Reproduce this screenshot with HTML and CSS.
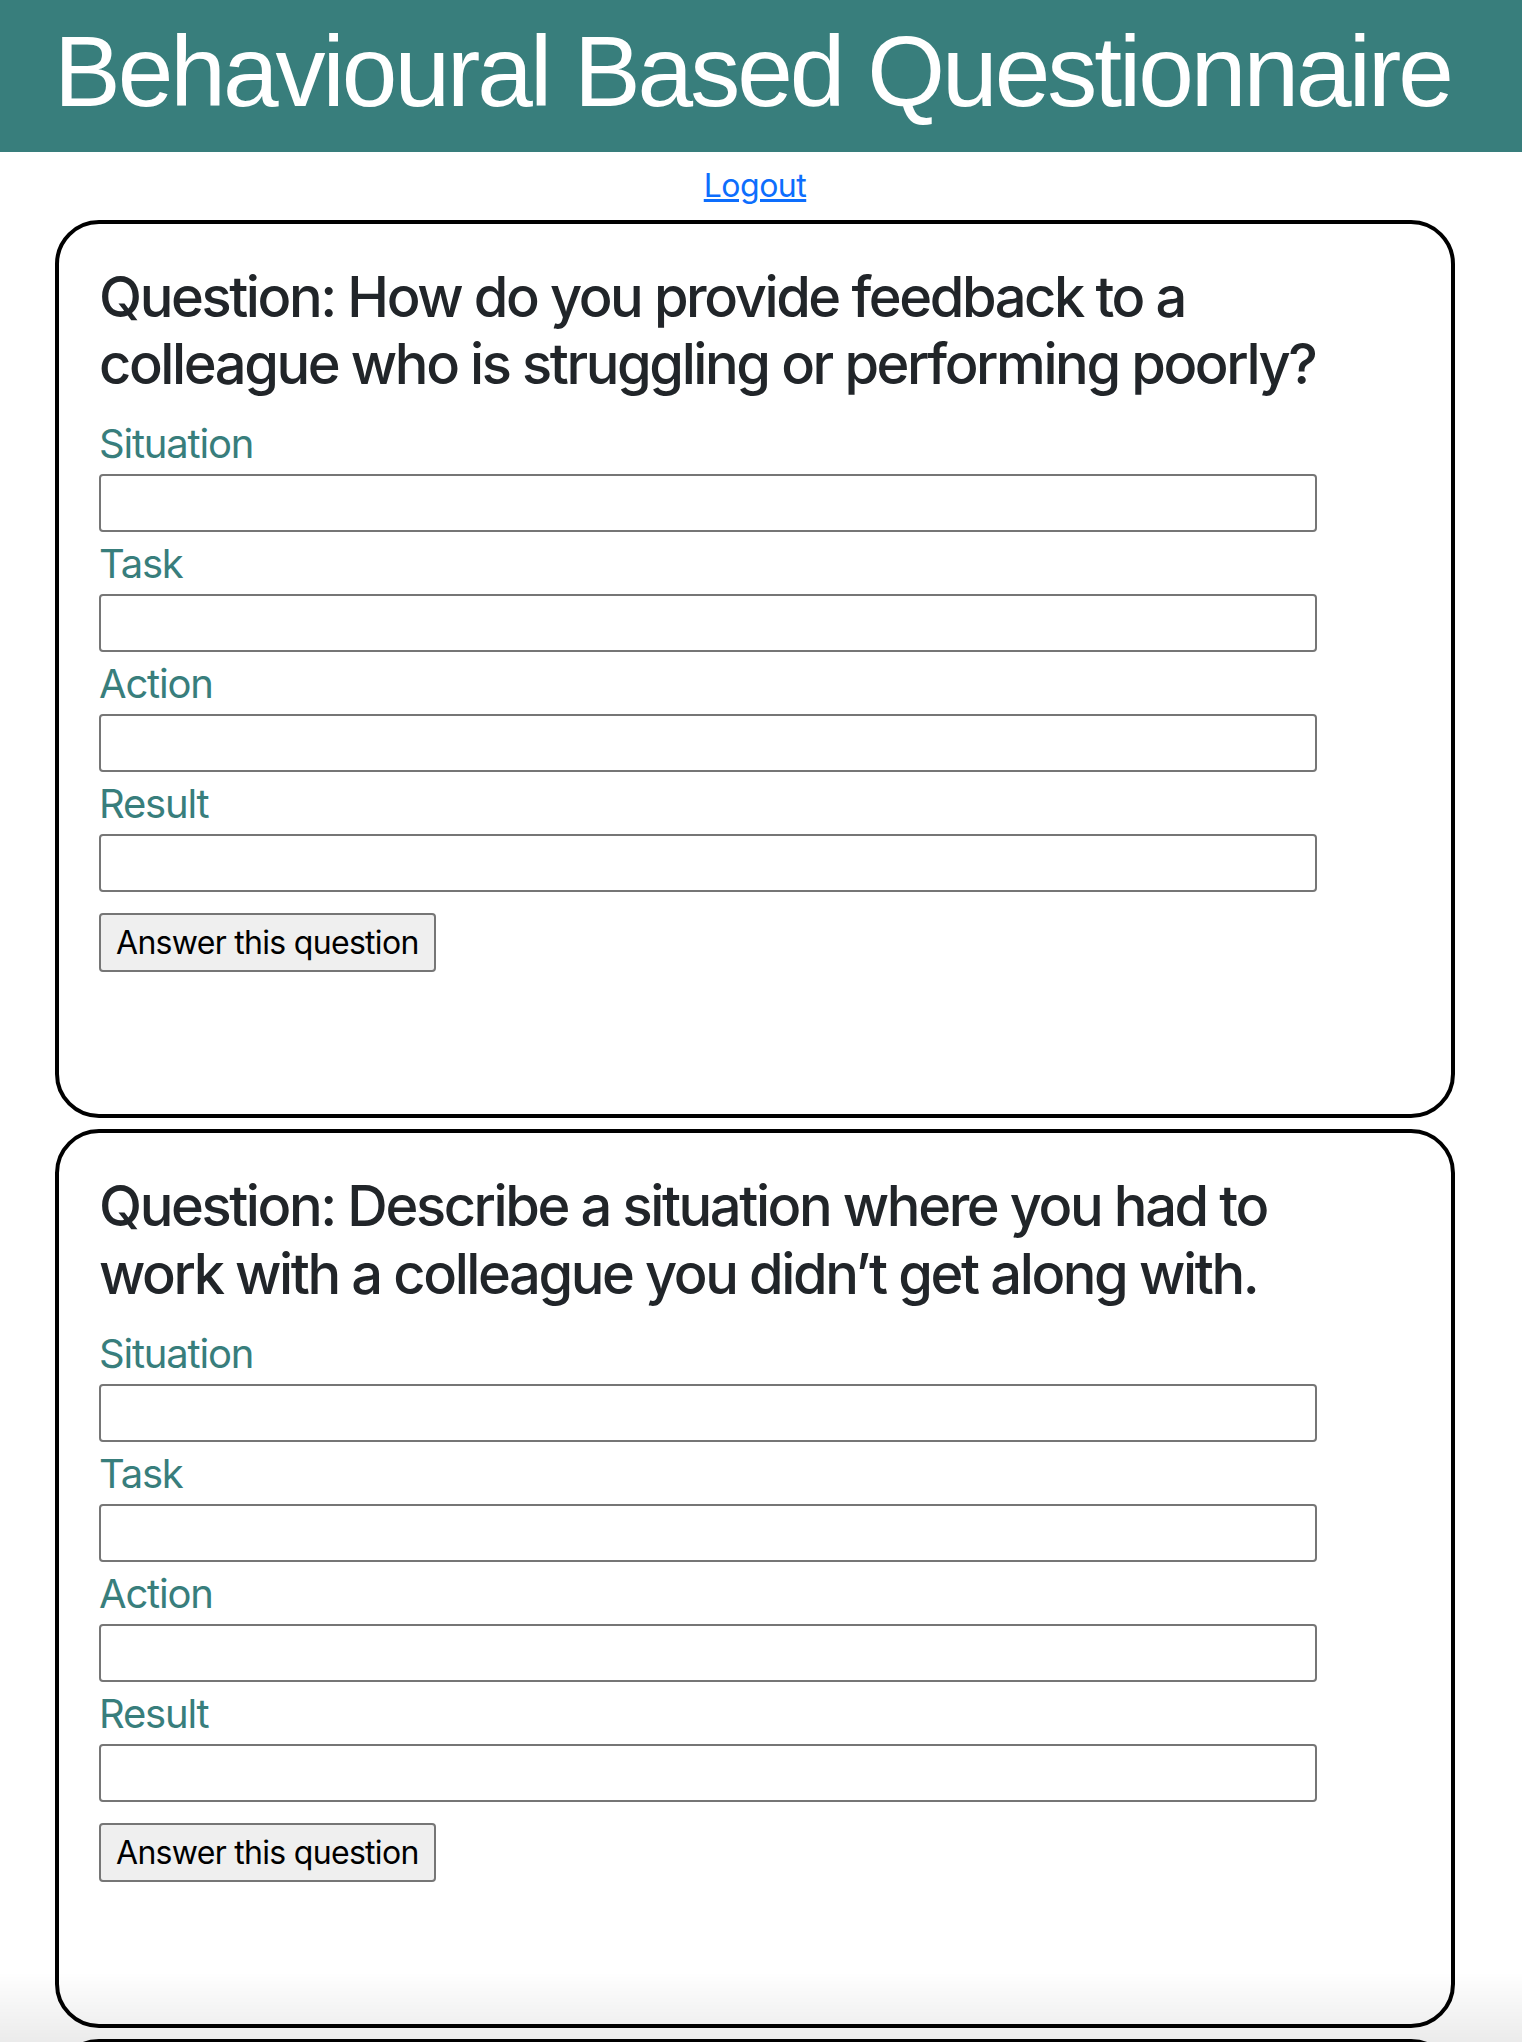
FILE: index.html
```html
<!DOCTYPE html>
<html lang="en">
<head>
    <meta charset="UTF-8">
    <meta name="viewport" content="width=device-width, initial-scale=1.0">
    <title>Behavioural Based Questionnaire</title>
    <link rel="stylesheet" href="styles.css">
</head>
<body>

    <header class="site-header">
        <h1>Behavioural Based Questionnaire</h1>
    </header>

    <main class="page">
        <div class="logout-row">
            <a href="#">Logout</a>
        </div>

        <section class="question-card">
            <h3 class="question-title">Question: How do you provide feedback to a colleague who is struggling or performing poorly?</h3>
            <form class="star-form">
                <label for="q1-situation">Situation</label>
                <input type="text" id="q1-situation">
                <label for="q1-task">Task</label>
                <input type="text" id="q1-task">
                <label for="q1-action">Action</label>
                <input type="text" id="q1-action">
                <label for="q1-result">Result</label>
                <input type="text" id="q1-result">
                <button type="button">Answer this question</button>
            </form>
        </section>

        <section class="question-card">
            <h3 class="question-title">Question: Describe a situation where you had to work with a colleague you didn’t get along with.</h3>
            <form class="star-form">
                <label for="q2-situation">Situation</label>
                <input type="text" id="q2-situation">
                <label for="q2-task">Task</label>
                <input type="text" id="q2-task">
                <label for="q2-action">Action</label>
                <input type="text" id="q2-action">
                <label for="q2-result">Result</label>
                <input type="text" id="q2-result">
                <button type="button">Answer this question</button>
            </form>
        </section>

        <section class="question-card">
            <h3 class="question-title">Question: Tell me about a time you had to meet a tight deadline.</h3>
            <form class="star-form">
                <label for="q3-situation">Situation</label>
                <input type="text" id="q3-situation">
                <label for="q3-task">Task</label>
                <input type="text" id="q3-task">
                <label for="q3-action">Action</label>
                <input type="text" id="q3-action">
                <label for="q3-result">Result</label>
                <input type="text" id="q3-result">
                <button type="button">Answer this question</button>
            </form>
        </section>
    </main>

    <div class="bottom-fade"></div>

</body>
</html>
```

FILE: styles.css
```css
/* General */
html, body {
    margin: 0;
    padding: 0;
    background: #fff;
    color: #212529;
    font-family: 'Inter', 'Noto Sans', sans-serif;
}

/* Header */
.site-header {
    background: #387e7c;
    height: 152px;
    box-sizing: border-box;
    padding: 14px 0 0 54px;
}

.site-header h1 {
    margin: 0;
    color: #fff;
    font-family: 'Liberation Sans', Arial, sans-serif;
    font-weight: normal;
    font-size: 100px;
    line-height: 115px;
    letter-spacing: -3px;
    white-space: nowrap;
}

.page {
    width: 1400px;
    margin-left: 55px;
}

.logout-row {
    text-align: center;
    font-size: 32px;
    line-height: 48px;
    letter-spacing: -0.5px;
    margin: 10px 0;
}

.logout-row a {
    color: #0d6efd;
}

/* Question cards */
.question-card {
    border: 4px solid #000;
    border-radius: 44px;
    padding: 40px 40px 142px;
    margin-bottom: 11px;
}

.question-title {
    max-width: 1240px;
    margin: 0 0 16px;
    font-size: 56px;
    font-weight: 500;
    line-height: 1.2;
    letter-spacing: -2.4px;
    color: #212529;
}

.star-form {
    max-width: 1218px;
}

.star-form label {
    display: block;
    font-size: 40px;
    line-height: 60px;
    letter-spacing: -1.2px;
    color: #387e7c;
}

.star-form input {
    display: block;
    width: 100%;
    height: 58px;
    box-sizing: border-box;
    margin: 0 0 2px;
    border: 2px solid #767676;
    border-radius: 4px;
    font-size: 32px;
    padding: 0 6px;
}

.star-form button {
    margin-top: 19px;
    height: 59px;
    padding: 0 15px;
    background: #efefef;
    color: #000;
    border: 2px solid #767676;
    border-radius: 4px;
    font-family: 'Inter', 'Noto Sans', sans-serif;
    font-size: 32px;
    letter-spacing: -0.7px;
}

/* fade along the bottom of the window */
.bottom-fade {
    position: fixed;
    left: 0;
    right: 0;
    bottom: 0;
    height: 70px;
    background: linear-gradient(rgba(0, 0, 0, 0), rgba(0, 0, 0, 0.08));
    pointer-events: none;
}
```
